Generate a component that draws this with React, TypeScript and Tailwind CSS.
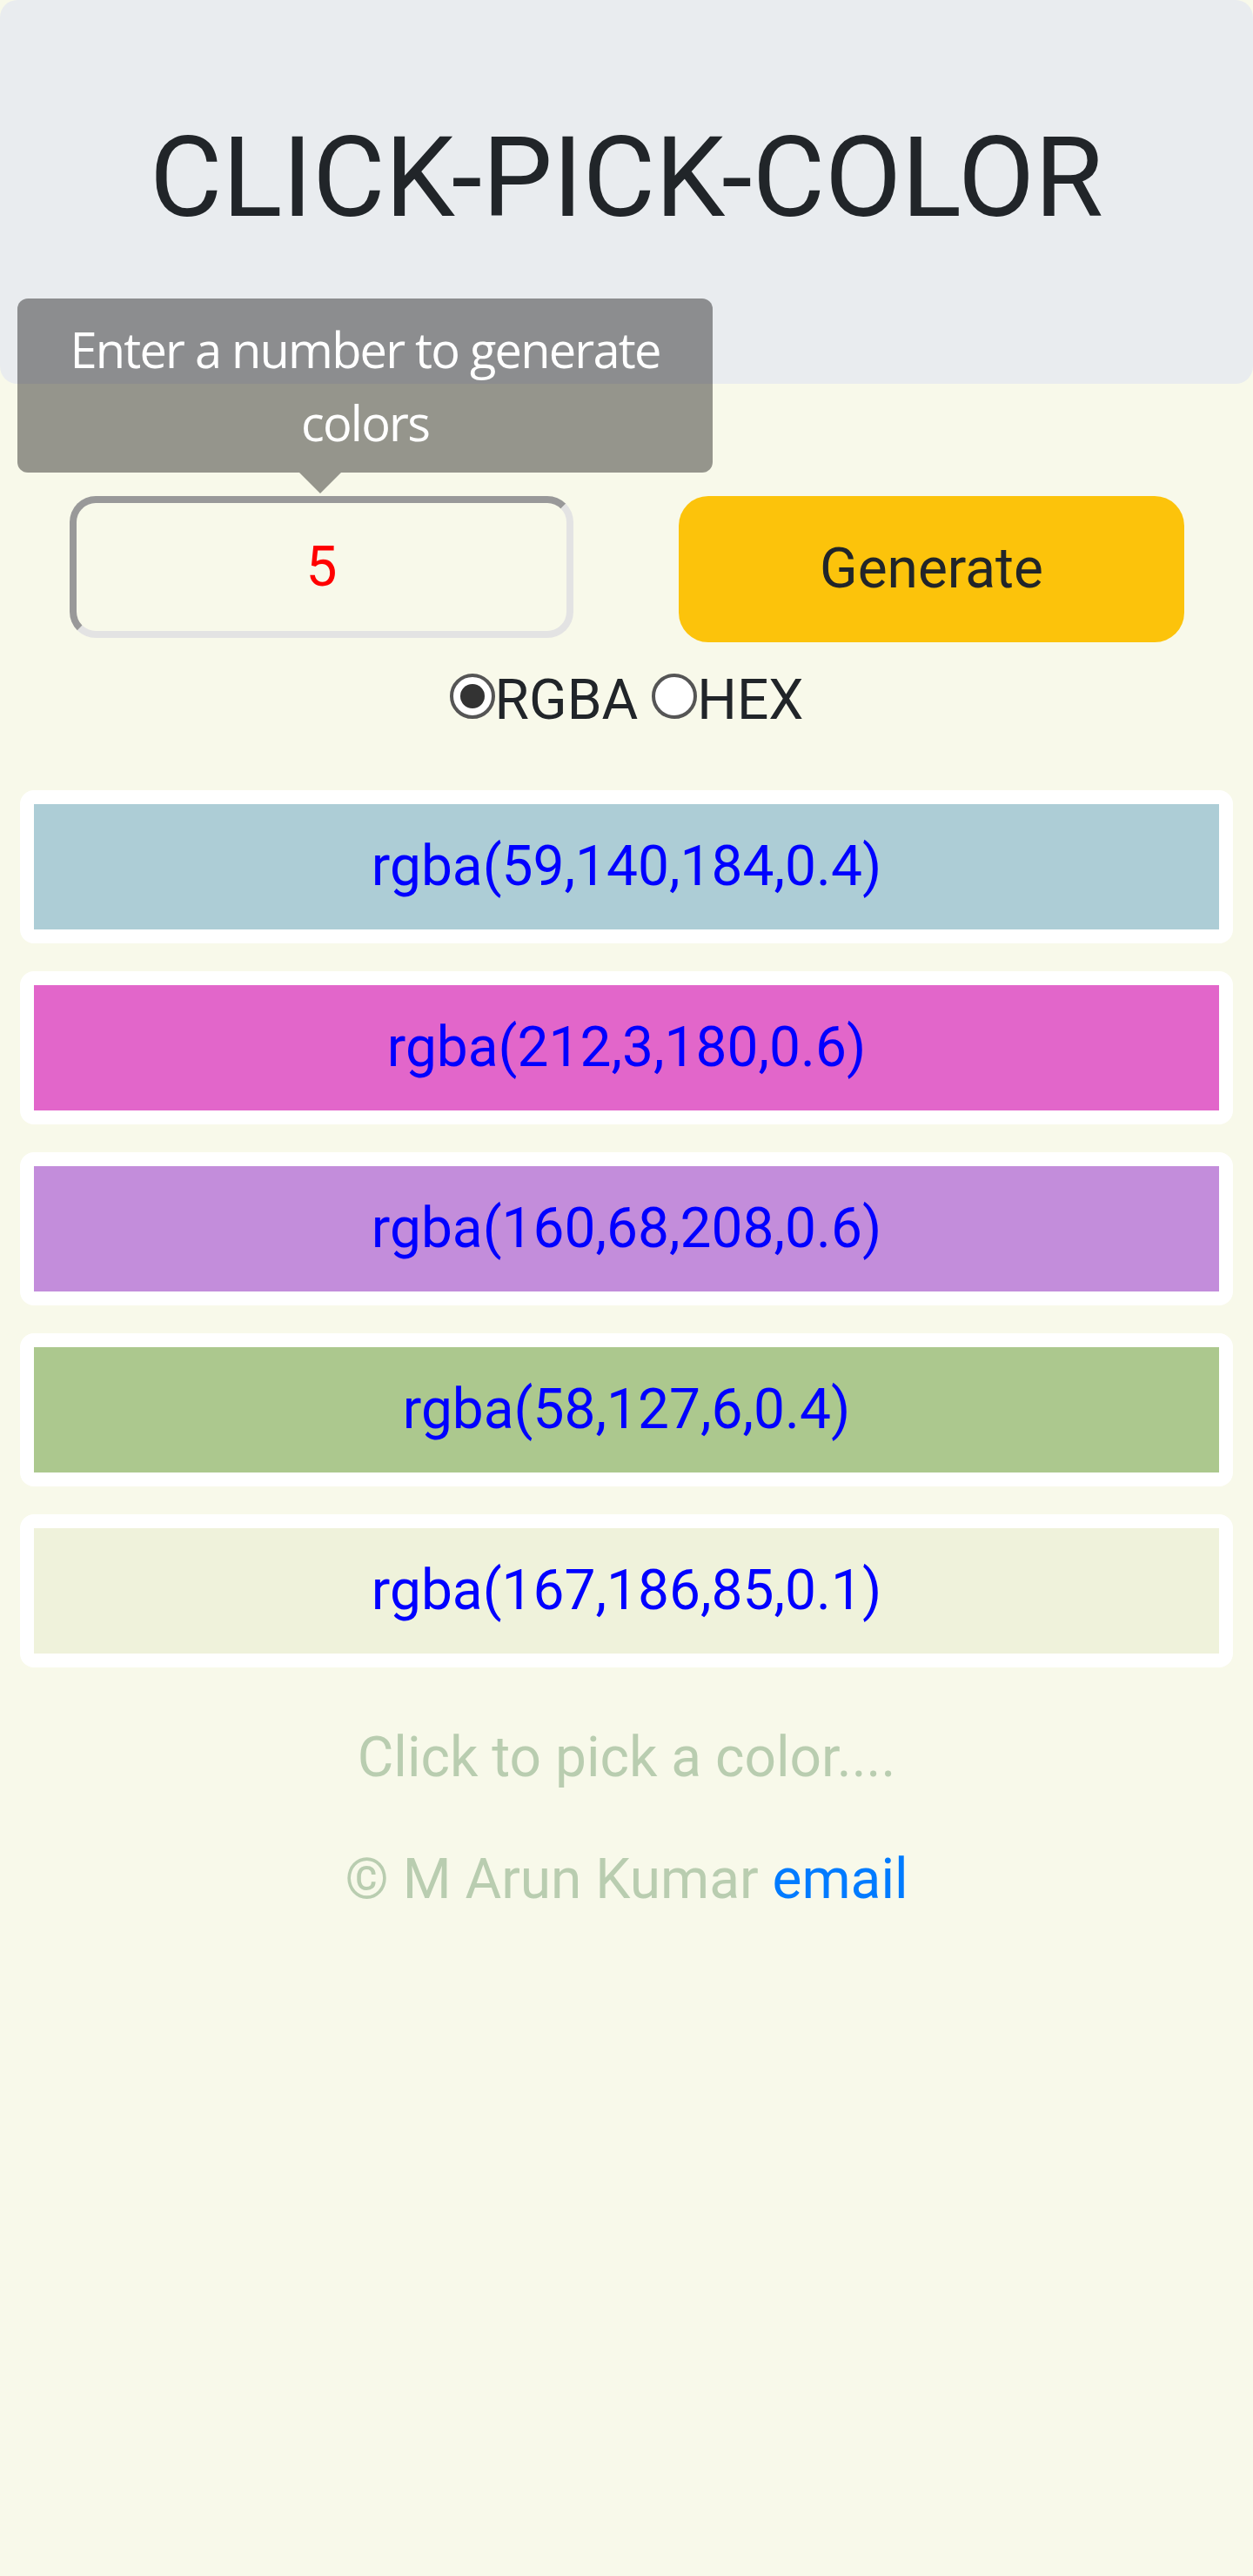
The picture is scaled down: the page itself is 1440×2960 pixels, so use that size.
import { useState } from "react";

const colors = [
    { label: "rgba(59,140,184,0.4)", bg: "bg-[rgba(59,140,184,0.4)]" },
    { label: "rgba(212,3,180,0.6)", bg: "bg-[rgba(212,3,180,0.6)]" },
    { label: "rgba(160,68,208,0.6)", bg: "bg-[rgba(160,68,208,0.6)]" },
    { label: "rgba(58,127,6,0.4)", bg: "bg-[rgba(58,127,6,0.4)]" },
    { label: "rgba(167,186,85,0.1)", bg: "bg-[rgba(167,186,85,0.1)]" },
];

function Radio({ checked }: { checked: boolean }) {
    return (
        <span className="relative block size-[52px] shrink-0 rounded-full border-[4px] border-[#555] bg-white">
            {checked && (
                <span className="absolute inset-[8px] rounded-full bg-[#333]" />
            )}
        </span>
    );
}

export default function App() {
    const [mode, setMode] = useState<"rgba" | "hex">("rgba");

    return (
        <div className="min-h-[2960px] w-full bg-[#f8f9ea] font-['Roboto',sans-serif] text-[#212529]">
            <header className="h-[441px] rounded-[20px] bg-[#e9ecef] pt-[128px] text-center">
                <h1 className="text-[128px] leading-[1.2] font-normal">
                    CLICK-PICK-COLOR
                </h1>
            </header>

            <div className="relative flex items-start pl-[80px] pt-[129px]">
                <div className="absolute left-[20px] top-[-98px] w-[799px] rounded-[12px] bg-[rgba(0,0,0,0.4)] px-4 py-4 text-center font-['Open_Sans',sans-serif] text-[56px] leading-[84px] tracking-[-1.8px] text-white">
                    Enter a number to generate colors
                    <span className="absolute left-[324px] top-full h-0 w-0 border-x-[24px] border-t-[24px] border-x-transparent border-t-[rgba(0,0,0,0.4)]" />
                </div>

                <input
                    type="number"
                    defaultValue={5}
                    className="h-[163px] w-[579px] rounded-[30px] border-[8px] border-t-[#999] border-l-[#999] border-b-[#e3e3e3] border-r-[#e3e3e3] bg-transparent text-center text-[64px] text-[#ff0000] outline-none [appearance:textfield] [&::-webkit-inner-spin-button]:appearance-none"
                />

                <button className="ml-[121px] h-[168px] w-[581px] rounded-[34px] bg-[#fcc30b] text-[64px] text-[#212529]">
                    Generate
                </button>
            </div>

            <div className="mt-[19px] flex items-baseline justify-center text-[64px] leading-[96px]">
                <label className="flex items-baseline" onClick={() => setMode("rgba")}>
                    <Radio checked={mode === "rgba"} />
                    <span>RGBA</span>
                </label>
                <label className="ml-[16px] flex items-baseline" onClick={() => setMode("hex")}>
                    <Radio checked={mode === "hex"} />
                    <span>HEX</span>
                </label>
            </div>

            <div className="mt-[55px] flex flex-col gap-[32px] px-[23px]">
                {colors.map((c) => (
                    <div
                        key={c.label}
                        className={`flex h-[176px] items-center justify-center rounded-[16px] border-[16px] border-white ${c.bg} text-[64px] text-[#0000ff]`}
                    >
                        {c.label}
                    </div>
                ))}
            </div>

            <p className="mt-[56px] text-center text-[64px] leading-[96px] text-[#b9cdb0]">
                Click to pick a color....
            </p>
            <p className="mt-[44px] text-center text-[64px] leading-[96px] text-[#b9cdb0]">
                © M Arun Kumar{" "}
                <a href="#" className="text-[#007bff]">
                    email
                </a>
            </p>
        </div>
    );
}
